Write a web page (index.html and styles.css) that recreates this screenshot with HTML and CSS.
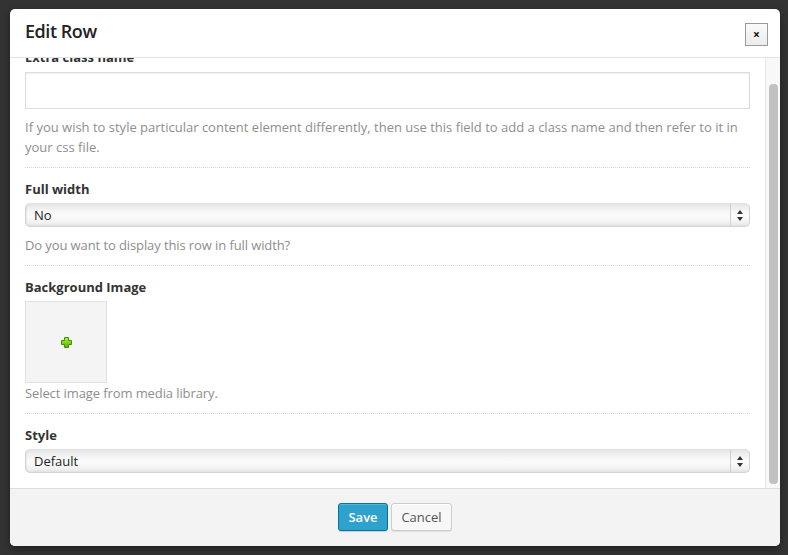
FILE: index.html
```html
<!DOCTYPE html>
<html lang="en">
<head>
<meta charset="utf-8">
<title>Edit Row</title>
<link rel="stylesheet" href="styles.css">
</head>
<body>
<div class="modal">
  <div class="modal-header">
    <h1 class="modal-title">Edit Row</h1>
    <button class="close-btn" type="button">×</button>
  </div>
  <div class="modal-body">
    <div class="scroll-area">
      <div class="scroll-inner">
        <div class="field">
          <div class="field-label">Extra class name</div>
          <input class="text-input" type="text">
          <p class="field-help">If you wish to style particular content element differently, then use this field to add a class name and then refer to it in your css file.</p>
        </div>
        <div class="field">
          <div class="field-label">Full width</div>
          <div class="select">
            <span class="select-value">No</span>
            <span class="select-arrows">
              <svg width="8" height="13" viewBox="0 0 8 13"><polygon points="4,1 7,5 1,5" fill="#333"/><polygon points="1,8 7,8 4,12" fill="#333"/></svg>
            </span>
          </div>
          <p class="field-help short">Do you want to display this row in full width?</p>
        </div>
        <div class="field">
          <div class="field-label">Background Image</div>
          <div class="image-picker">
            <svg width="11" height="11" viewBox="0 0 11 11">
              <defs><linearGradient id="g" x1="0" y1="0" x2="0" y2="1"><stop offset="0" stop-color="#b4f04a"/><stop offset="1" stop-color="#56b000"/></linearGradient></defs>
              <polygon points="3.5,0.5 7.5,0.5 7.5,3.5 10.5,3.5 10.5,7.5 7.5,7.5 7.5,10.5 3.5,10.5 3.5,7.5 0.5,7.5 0.5,3.5 3.5,3.5" fill="url(#g)" stroke="#3f9200" stroke-width="1"/>
            </svg>
          </div>
          <p class="field-help tight short">Select image from media library.</p>
        </div>
        <div class="field last">
          <div class="field-label">Style</div>
          <div class="select">
            <span class="select-value">Default</span>
            <span class="select-arrows">
              <svg width="8" height="13" viewBox="0 0 8 13"><polygon points="4,1 7,5 1,5" fill="#333"/><polygon points="1,8 7,8 4,12" fill="#333"/></svg>
            </span>
          </div>
        </div>
      </div>
    </div>
    <div class="scrollbar"><div class="scrollbar-thumb"></div></div>
  </div>
  <div class="modal-footer">
    <button class="btn btn-primary" type="button">Save</button>
    <button class="btn btn-secondary" type="button">Cancel</button>
  </div>
</div>
</body>
</html>
```
FILE: styles.css
```css
html, body {
  margin: 0;
  padding: 0;
}
body {
  background: #333333;
  font-family: "Open Sans", "DejaVu Sans", sans-serif;
  font-size: 13px;
  color: #333;
  padding: 9px 8px 0 10px;
  height: 555px;
  box-sizing: border-box;
  overflow: hidden;
}
.modal {
  width: 770px;
  height: 537px;
  background: #fff;
  border-radius: 5px;
  display: flex;
  flex-direction: column;
  overflow: hidden;
  box-shadow: 0 3px 8px rgba(0,0,0,0.4);
}
.modal-header {
  flex: none;
  border-bottom: 1px solid #e2e2e2;
  display: flex;
  justify-content: space-between;
  align-items: flex-start;
  padding: 14px 12px 0 15px;
  box-sizing: content-box;
  height: 34px;
}
.modal-title {
  margin: -3px 0 0 0;
  font-size: 18px;
  line-height: 23px;
  font-weight: 600;
  letter-spacing: -0.45px;
  color: #222;
}
.close-btn {
  width: 23px;
  height: 23px;
  padding: 0;
  margin: 0;
  border: 1px solid #9a9a9a;
  background: linear-gradient(#fafafa, #ececec);
  font-family: "Open Sans", sans-serif;
  font-weight: 700;
  font-size: 12px;
  line-height: 19px;
  color: #111;
  text-align: center;
}
.modal-body {
  flex: none;
  height: 430px;
  display: flex;
}
.scroll-area {
  flex: 1;
  overflow: hidden;
  padding: 0 15px;
}
.scroll-inner {
  margin-top: -22px;
}
.field {
  padding: 11px 0 10px;
  border-bottom: 1px dotted #d6d6d6;
}
.field.last {
  border-bottom: none;
}
.field-label {
  font-weight: 700;
  line-height: 20px;
  color: #333;
  margin-bottom: 4px;
}
.text-input {
  display: block;
  width: 100%;
  box-sizing: border-box;
  height: 37px;
  margin: 5px 0 0;
  border: 1px solid #dcdcdc;
  box-shadow: inset 0 1px 2px rgba(0,0,0,0.07);
  background: #fff;
}
.field-help {
  margin: 8px 0 0;
  line-height: 20px;
  color: #8e8e8e;
}
.field-help.short {
  letter-spacing: -0.1px;
}
.field-help.tight {
  margin-top: 0;
}
.select {
  height: 24px;
  box-sizing: border-box;
  border: 1px solid #d3d3d3;
  border-top-color: #e2e2e2;
  border-radius: 5px;
  background: linear-gradient(to bottom, #e6e6e6 0%, #f6f6f6 35%, #fbfbfb 55%, #f1f1f1 85%, #e3e3e3 100%);
  box-shadow: inset 1px 0 1px rgba(0,0,0,0.06);
  display: flex;
  align-items: center;
}
.select-value {
  flex: 1;
  padding-left: 8px;
  color: #222;
  line-height: 20px;
}
.select-arrows {
  width: 18px;
  height: 22px;
  border-left: 1px solid #cfcfcf;
  display: flex;
  align-items: center;
  justify-content: center;
}
.select-arrows svg {
  display: block;
}
.image-picker {
  width: 82px;
  height: 82px;
  box-sizing: border-box;
  border: 1px solid #e0e0e0;
  background: #f4f4f4;
  display: flex;
  align-items: center;
  justify-content: center;
}
.image-picker svg {
  display: block;
}
.scrollbar {
  width: 15px;
  flex: none;
  box-sizing: border-box;
  border-left: 1px solid #e6e6e6;
  background: #f8f8f8;
  padding: 26px 2px 4px 3px;
  display: flex;
}
.scrollbar-thumb {
  width: 8px;
  flex: 1;
  background: #c2c2c2;
  border-radius: 4px;
}
.modal-footer {
  flex: 1;
  background: #f3f3f3;
  border-top: 1px solid #dedede;
  display: flex;
  justify-content: center;
  align-items: flex-start;
  gap: 3px;
  padding-top: 14px;
}
.btn {
  height: 28px;
  box-sizing: border-box;
  border-radius: 3px;
  font-family: "Open Sans", sans-serif;
  font-size: 13px;
  line-height: 24px;
  padding: 0;
  margin: 0;
  text-align: center;
}
.btn-primary {
  width: 50px;
  background: #2ea2cc;
  border: 1px solid #0074a2;
  box-shadow: inset 0 1px 0 rgba(120,200,230,0.5), 0 1px 0 rgba(0,0,0,0.15);
  color: #fff;
  font-weight: 600;
}
.btn-secondary {
  width: 61px;
  background: #f7f7f7;
  border: 1px solid #cccccc;
  box-shadow: inset 0 1px 0 #fff, 0 1px 0 rgba(0,0,0,0.08);
  color: #555;
}
```
